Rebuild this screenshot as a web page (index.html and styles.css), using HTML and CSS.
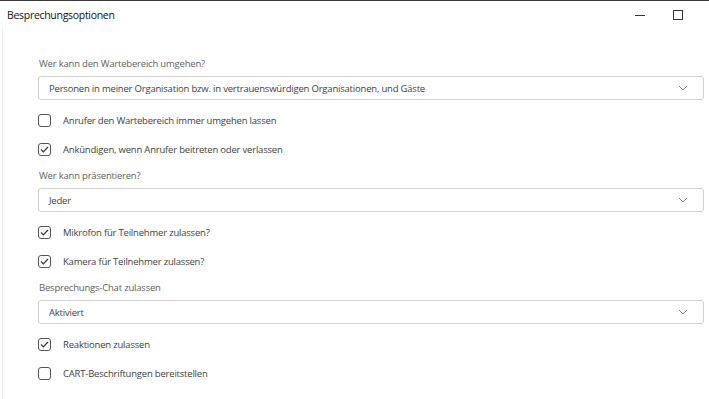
FILE: index.html
```html
<!DOCTYPE html>
<html lang="de">
<head>
  <meta charset="UTF-8">
  <meta name="viewport" content="width=device-width, initial-scale=1.0">
  <title>Besprechungsoptionen</title>
  <link rel="stylesheet" href="styles.css">
</head>
<body>
  <div class="window">
    <div class="titlebar">
      <span class="title">Besprechungsoptionen</span>
      <div class="controls">
        <span class="ctl ctl-min"></span>
        <span class="ctl ctl-max"></span>
      </div>
    </div>

    <div class="content">
      <!-- Wartebereich -->
      <div class="label">Wer kann den Wartebereich umgehen?</div>
      <div class="select">
        <span>Personen in meiner Organisation bzw. in vertrauenswürdigen Organisationen, und Gäste</span>
        <svg class="chevron" width="10" height="6" viewBox="0 0 10 6"><path d="M1 1l4 4 4-4" fill="none" stroke="#8a8a8a" stroke-width="1"/></svg>
      </div>
      <div class="options">
        <div class="check">
          <span class="box"></span>
          <span>Anrufer den Wartebereich immer umgehen lassen</span>
        </div>
        <div class="check">
          <span class="box on"><svg width="9" height="7" viewBox="0 0 9 7"><path d="M1 3.5l2.3 2.3L8 1" fill="none" stroke="#333" stroke-width="1.2"/></svg></span>
          <span>Ankündigen, wenn Anrufer beitreten oder verlassen</span>
        </div>
      </div>

      <!-- Präsentieren -->
      <div class="label">Wer kann präsentieren?</div>
      <div class="select">
        <span>Jeder</span>
        <svg class="chevron" width="10" height="6" viewBox="0 0 10 6"><path d="M1 1l4 4 4-4" fill="none" stroke="#8a8a8a" stroke-width="1"/></svg>
      </div>
      <div class="options">
        <div class="check">
          <span class="box on"><svg width="9" height="7" viewBox="0 0 9 7"><path d="M1 3.5l2.3 2.3L8 1" fill="none" stroke="#333" stroke-width="1.2"/></svg></span>
          <span>Mikrofon für Teilnehmer zulassen?</span>
        </div>
        <div class="check">
          <span class="box on"><svg width="9" height="7" viewBox="0 0 9 7"><path d="M1 3.5l2.3 2.3L8 1" fill="none" stroke="#333" stroke-width="1.2"/></svg></span>
          <span>Kamera für Teilnehmer zulassen?</span>
        </div>
      </div>

      <!-- Chat -->
      <div class="label">Besprechungs-Chat zulassen</div>
      <div class="select">
        <span>Aktiviert</span>
        <svg class="chevron" width="10" height="6" viewBox="0 0 10 6"><path d="M1 1l4 4 4-4" fill="none" stroke="#8a8a8a" stroke-width="1"/></svg>
      </div>
      <div class="options">
        <div class="check">
          <span class="box on"><svg width="9" height="7" viewBox="0 0 9 7"><path d="M1 3.5l2.3 2.3L8 1" fill="none" stroke="#333" stroke-width="1.2"/></svg></span>
          <span>Reaktionen zulassen</span>
        </div>
        <div class="check">
          <span class="box"></span>
          <span>CART-Beschriftungen bereitstellen</span>
        </div>
      </div>
    </div>
  </div>
</body>
</html>
```

FILE: styles.css
```css
/* reset */
*{
  margin: 0;
  padding: 0;
  box-sizing: border-box;
}
html, body{
  width: 709px;
  height: 399px;
  overflow: hidden;
  background-color: #fff;
}
body{
  font-family: "Open Sans", "Noto Sans", sans-serif;
  color: #424242;
}
.window{
  height: 399px;
  border-top: 1px solid #3b3b3b;
}
.titlebar{
  height: 27px;
  display: flex;
  align-items: center;
  justify-content: space-between;
  padding-left: 7px;
}
.title{
  font-size: 10.5px;
  letter-spacing: -0.3px;
  color: #111;
}
.controls{
  display: flex;
  align-items: center;
  gap: 28px;
  padding-right: 26px;
}
.ctl{
  display: block;
  width: 10px;
}
.ctl-min{
  height: 1px;
  background-color: #333;
  margin-top: 1px;
}
.ctl-max{
  height: 10px;
  border: 1px solid #333;
}
.content{
  border-left: 1px solid #eee;
  margin-left: 2px;
  height: 371px;
  padding: 28px 5px 0 35px;
  font-size: 9.5px;
  letter-spacing: -0.2px;
}
.label{
  line-height: 16px;
  color: #616161;
  padding-left: 1px;
}
.select{
  height: 24px;
  margin-top: 4px;
  border: 1px solid #d1d1d1;
  border-radius: 3px;
  display: flex;
  align-items: center;
  justify-content: space-between;
  padding: 0 15px 0 10px;
}
.options{
  margin-top: 6px;
  margin-bottom: 4px;
}
.check{
  height: 29px;
  display: flex;
  align-items: center;
  gap: 12px;
}
.box{
  width: 13px;
  height: 13px;
  border: 1px solid #555;
  border-radius: 3px;
  display: flex;
  align-items: center;
  justify-content: center;
}
```
